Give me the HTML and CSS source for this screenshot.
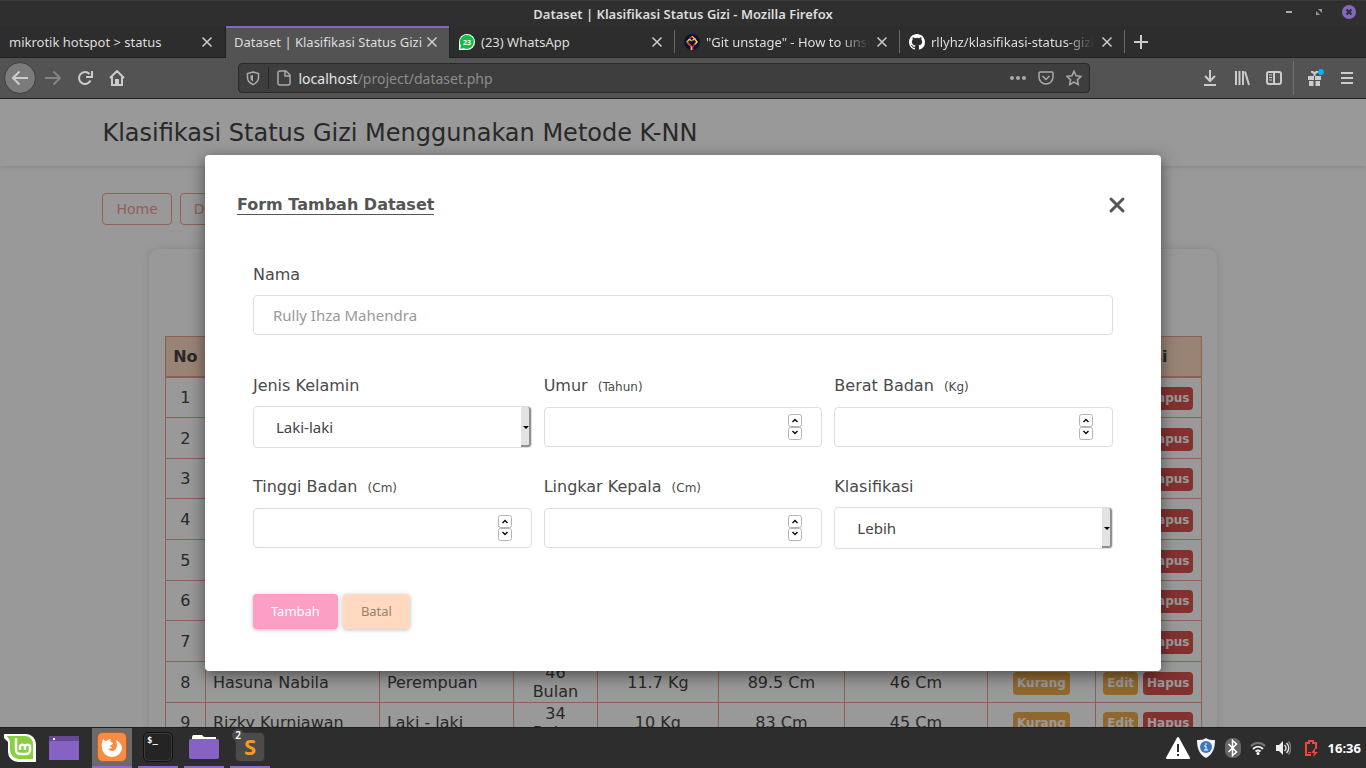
FILE: index.html
```html
<!DOCTYPE html>
<html lang="id">
<head>
<meta charset="utf-8">
<title>Dataset | Klasifikasi Status Gizi</title>
<link rel="stylesheet" href="styles.css">
</head>
<body>
<div class="titlebar">
  <span class="window-title">Dataset | Klasifikasi Status Gizi - Mozilla Firefox</span>
  <div class="window-controls">
    <button type="button" aria-label="Minimize"><svg width="14" height="14" viewBox="0 0 14 14"><path d="M4 7h6" stroke="#aaa" stroke-width="2"/></svg></button>
    <button type="button" aria-label="Restore"><svg width="14" height="14" viewBox="0 0 14 14"><path d="M6 4h4v4zM4 6v4h4z" fill="#999"/></svg></button>
    <button type="button" aria-label="Close"><svg width="14" height="14" viewBox="0 0 14 14"><circle cx="7" cy="7" r="7" fill="#8667bd"/><path d="M4.500 4.500l5 5m0-5l-5 5" stroke="#2d2d2d" stroke-width="2"/></svg></button>
  </div>
</div>

<div class="tabs">
  <div class="tab"><span class="tab-label">mikrotik hotspot &gt; status</span><button type="button" class="tab-close" aria-label="Close tab"><svg width="12" height="12" viewBox="0 0 12 12"><path d="M1.500 1.500l9 9m0-9l-9 9"/></svg></button></div>
  <div class="tab tab-active"><span class="tab-label">Dataset | Klasifikasi Status Gizi</span><button type="button" class="tab-close" aria-label="Close tab"><svg width="12" height="12" viewBox="0 0 12 12"><path d="M1.500 1.500l9 9m0-9l-9 9"/></svg></button></div>
  <div class="tab tab-divided">
    <svg class="favicon" width="16" height="16" viewBox="0 0 16 16"><path d="M0 16V8a8 8 0 1 1 8 8z" fill="#fff"/><path d="M1.200 14.800l.6-3.400A7 7 0 1 1 4.800 14.200z" fill="#10c042"/><text x="8" y="10.800" class="favicon-count">23</text></svg>
    <span class="tab-label">(23) WhatsApp</span><button type="button" class="tab-close" aria-label="Close tab"><svg width="12" height="12" viewBox="0 0 12 12"><path d="M1.500 1.500l9 9m0-9l-9 9"/></svg></button></div>
  <div class="tab tab-divided">
    <svg class="favicon" width="16" height="16" viewBox="0 0 16 16"><circle cx="8" cy="8" r="8" fill="#0b1233"/><g fill="none" stroke-width="1.300"><path d="M7.300 16v-3.500L3 8l2.500-3 2 2M8 2.200l2.500 2.300-2 2" stroke="#f6d43c"/><path d="M5.300 5L8 2.200M8.700 16v-3.500L13 8l-2.500-3.500M3 8l4.300 4.500" stroke="#e32758"/><path d="M10.500 4.500L13 8l-2 2.200" stroke="#f6d43c"/></g></svg>
    <span class="tab-label tab-fade">"Git unstage" - How to unstage</span><button type="button" class="tab-close" aria-label="Close tab"><svg width="12" height="12" viewBox="0 0 12 12"><path d="M1.500 1.500l9 9m0-9l-9 9"/></svg></button></div>
  <div class="tab tab-divided">
    <svg class="favicon" width="16" height="16" viewBox="0 0 16 16"><path fill="#fff" d="M8 0C3.580 0 0 3.580 0 8c0 3.540 2.290 6.530 5.470 7.590.4.070.55-.17.55-.38 0-.19-.01-.82-.01-1.490-2.010.37-2.530-.49-2.690-.94-.09-.23-.48-.94-.82-1.130-.28-.15-.68-.52-.01-.53.63-.01 1.080.58 1.230.82.72 1.210 1.870.87 2.330.66.070-.52.280-.87.51-1.070-1.780-.2-3.640-.89-3.640-3.950 0-.87.31-1.590.82-2.150-.08-.2-.36-1.020.08-2.120 0 0 .67-.21 2.200.82a7.420 7.420 0 0 1 4 0c1.530-1.040 2.200-.82 2.200-.82.44 1.100.16 1.920.08 2.120.51.56.82 1.270.82 2.150 0 3.070-1.870 3.750-3.650 3.950.29.25.54.73.54 1.480 0 1.070-.01 1.930-.01 2.200 0 .21.15.46.55.38A8.010 8.010 0 0 0 16 8c0-4.420-3.580-8-8-8z"/></svg>
    <span class="tab-label tab-fade">rllyhz/klasifikasi-status-gizi-knn</span><button type="button" class="tab-close" aria-label="Close tab"><svg width="12" height="12" viewBox="0 0 12 12"><path d="M1.500 1.500l9 9m0-9l-9 9"/></svg></button></div>
  <button type="button" class="new-tab" aria-label="New tab"><svg width="14" height="14" viewBox="0 0 14 14"><path d="M7 0v14M0 7h14"/></svg></button>
</div>

<div class="toolbar">
  <button type="button" class="tool tool-back" aria-label="Back"><svg width="16" height="16" viewBox="0 0 16 16"><path d="M16 8H1M7.500 1.500L1 8l6.500 6.500"/></svg></button>
  <button type="button" class="tool tool-off" aria-label="Forward"><svg width="16" height="16" viewBox="0 0 16 16"><path d="M0 8h15M8.500 1.500L15 8l-6.500 6.500"/></svg></button>
  <button type="button" class="tool" aria-label="Reload"><svg width="16" height="16" viewBox="0 0 16 16"><path d="M13.500 10.500A6 6 0 1 1 12.500 4"/><path d="M15 1v6H9" /></svg></button>
  <button type="button" class="tool" aria-label="Home"><svg width="16" height="16" viewBox="0 0 16 16"><path d="M1 8l7-7 7 7M3 7v8h10V7M7 15v-5h2v5"/></svg></button>
  <span class="spacer"></span>
  <div class="urlbar">
    <svg width="14" height="16" viewBox="0 0 14 16"><path d="M7 2l5.500 1.500v4c0 3.500-2 5.500-5.500 7-3.500-1.500-5.500-3.500-5.500-7v-4z"/><path d="M7 5v6.500c-2-1-2.500-2-2.500-4v-2z" fill="#aaa" stroke="none"/></svg>
    <span class="url-rule"></span>
    <svg width="14" height="16" viewBox="0 0 14 16"><path d="M3 1h6l4 4v8a2 2 0 0 1-2 2H3a2 2 0 0 1-2-2V3a2 2 0 0 1 2-2zM8 1v5h5"/></svg>
    <span class="url"><b>localhost</b>/project/dataset.php</span>
    <svg width="16" height="16" viewBox="0 0 16 16"><g fill="#aaa" stroke="none"><circle cx="2" cy="8" r="2"/><circle cx="8" cy="8" r="2"/><circle cx="14" cy="8" r="2"/></g></svg>
    <svg width="16" height="16" viewBox="0 0 16 16"><path d="M2 2h12a1 1 0 0 1 1 1v4a7 7 0 0 1-14 0V3a1 1 0 0 1 1-1z"/><path d="M4.500 6L8 9.500 11.500 6"/></svg>
    <svg width="16" height="16" viewBox="0 0 16 16"><path d="M8 1.200l2.100 4.500 4.900.6-3.600 3.400.9 4.900L8 12.200l-4.300 2.400.9-4.900L1 6.300l4.900-.6z"/></svg>
  </div>
  <span class="spacer"></span>
  <button type="button" class="tool" aria-label="Downloads"><svg width="16" height="16" viewBox="0 0 16 16"><path d="M8 0v11M3 6l5 5 5-5M2 15h12"/></svg></button>
  <button type="button" class="tool" aria-label="Library"><svg width="16" height="16" viewBox="0 0 16 16"><path d="M2 1v14M5.500 1v14M9 1v14M11 1.500L15 15"/></svg></button>
  <button type="button" class="tool" aria-label="Sidebar"><svg width="16" height="16" viewBox="0 0 16 16"><rect x="1" y="2" width="14" height="12" rx="2"/><path d="M8 2v12"/><path d="M3 5h3M3 7.500h3M3 10h3" stroke-width="1"/></svg></button>
  <span class="tool-rule"></span>
  <button type="button" class="tool tool-gift" aria-label="What's new"><svg width="18" height="18" viewBox="0 0 18 18"><path fill="#ccc" stroke="none" d="M2 7h5.500V5L5 3.500V2h2l1.500 1L10 2h2v1.500L9.500 5v2H15v4H9.500v1H14v5H9.500v-5h-2v5H3v-5h4.500v-1H2z"/><path d="M8.500 7v10M2 11.500h13" stroke="#535353" stroke-width="1"/><circle cx="15" cy="3" r="3" fill="#00b3f4" stroke="none"/></svg></button>
  <button type="button" class="tool" aria-label="Menu"><svg width="14" height="14" viewBox="0 0 14 14"><path d="M1 2h12M1 7h12M1 12h12"/></svg></button>
</div>

<main class="viewport">
  <div class="page">
    <header class="site-header"><h1 class="container">Klasifikasi Status Gizi Menggunakan Metode K-NN</h1></header>
    <div class="container">
      <nav class="site-nav"><a href="#home">Home</a><a href="#dataset">Dataset</a></nav>
      <section class="card">
        <table class="dataset">
          <colgroup><col class="c-no"><col class="c-name"><col class="c-sex"><col class="c-age"><col class="c-weight"><col class="c-height"><col class="c-head"><col class="c-class"><col class="c-act"></colgroup>
          <thead><tr><th>No</th><th>Nama</th><th>Kelamin</th><th>Umur</th><th>Berat</th><th>Tinggi</th><th>Kepala</th><th>Status</th><th>Aksi</th></tr></thead>
          <tbody>
            <tr><td>1</td><td></td><td></td><td></td><td></td><td></td><td></td><td></td><td><span class="actions"><button type="button" class="badge warn">Edit</button><button type="button" class="badge danger">Hapus</button></span></td></tr>
            <tr><td>2</td><td></td><td></td><td></td><td></td><td></td><td></td><td></td><td><span class="actions"><button type="button" class="badge warn">Edit</button><button type="button" class="badge danger">Hapus</button></span></td></tr>
            <tr><td>3</td><td></td><td></td><td></td><td></td><td></td><td></td><td></td><td><span class="actions"><button type="button" class="badge warn">Edit</button><button type="button" class="badge danger">Hapus</button></span></td></tr>
            <tr><td>4</td><td></td><td></td><td></td><td></td><td></td><td></td><td></td><td><span class="actions"><button type="button" class="badge warn">Edit</button><button type="button" class="badge danger">Hapus</button></span></td></tr>
            <tr><td>5</td><td></td><td></td><td></td><td></td><td></td><td></td><td></td><td><span class="actions"><button type="button" class="badge warn">Edit</button><button type="button" class="badge danger">Hapus</button></span></td></tr>
            <tr><td>6</td><td></td><td></td><td></td><td></td><td></td><td></td><td></td><td><span class="actions"><button type="button" class="badge warn">Edit</button><button type="button" class="badge danger">Hapus</button></span></td></tr>
            <tr><td>7</td><td></td><td></td><td></td><td></td><td></td><td></td><td></td><td><span class="actions"><button type="button" class="badge warn">Edit</button><button type="button" class="badge danger">Hapus</button></span></td></tr>
            <tr><td>8</td><td class="left">Hasuna Nabila</td><td class="left">Perempuan</td><td>46 Bulan</td><td>11.7 Kg</td><td>89.5 Cm</td><td>46 Cm</td><td><span class="actions"><span class="badge warn">Kurang</span></span></td><td><span class="actions"><button type="button" class="badge warn">Edit</button><button type="button" class="badge danger">Hapus</button></span></td></tr>
            <tr><td>9</td><td class="left">Rizky Kurniawan</td><td class="left">Laki - laki</td><td>34 Bulan</td><td>10 Kg</td><td>83 Cm</td><td>45 Cm</td><td><span class="actions"><span class="badge warn">Kurang</span></span></td><td><span class="actions"><button type="button" class="badge warn">Edit</button><button type="button" class="badge danger">Hapus</button></span></td></tr>
          </tbody>
        </table>
      </section>
    </div>
  </div>

  <div class="overlay">
    <form class="modal" role="dialog" aria-labelledby="form-title">
      <div class="modal-head">
        <h2 id="form-title">Form Tambah Dataset</h2>
        <button type="button" class="modal-close" aria-label="Tutup"><svg width="18" height="18" viewBox="0 0 18 18"><path d="M3 3l12 12M15 3L3 15"/></svg></button>
      </div>
      <div class="modal-body">
        <div class="field">
          <label for="nama">Nama</label>
          <input id="nama" type="text" placeholder="Rully Ihza Mahendra">
        </div>
        <div class="grid">
          <div class="field"><label for="kelamin">Jenis Kelamin</label><div class="control select"><select id="kelamin"><option>Laki-laki</option><option>Perempuan</option></select></div></div>
          <div class="field"><label for="umur">Umur <small>(Tahun)</small></label><div class="control"><input id="umur" type="number"><svg class="spin" width="14" height="26" viewBox="0 0 14 26"><rect x=".5" y=".5" width="13" height="12" rx="2"/><rect x=".5" y="13.500" width="13" height="12" rx="2"/><path d="M4.500 8L7 5.500 9.500 8M4.500 17L7 19.500 9.500 17"/></svg></div></div>
          <div class="field"><label for="berat">Berat Badan <small>(Kg)</small></label><div class="control"><input id="berat" type="number"><svg class="spin" width="14" height="26" viewBox="0 0 14 26"><rect x=".5" y=".5" width="13" height="12" rx="2"/><rect x=".5" y="13.500" width="13" height="12" rx="2"/><path d="M4.500 8L7 5.500 9.500 8M4.500 17L7 19.500 9.500 17"/></svg></div></div>
          <div class="field"><label for="tinggi">Tinggi Badan <small>(Cm)</small></label><div class="control"><input id="tinggi" type="number"><svg class="spin" width="14" height="26" viewBox="0 0 14 26"><rect x=".5" y=".5" width="13" height="12" rx="2"/><rect x=".5" y="13.500" width="13" height="12" rx="2"/><path d="M4.500 8L7 5.500 9.500 8M4.500 17L7 19.500 9.500 17"/></svg></div></div>
          <div class="field"><label for="kepala">Lingkar Kepala <small>(Cm)</small></label><div class="control"><input id="kepala" type="number"><svg class="spin" width="14" height="26" viewBox="0 0 14 26"><rect x=".5" y=".5" width="13" height="12" rx="2"/><rect x=".5" y="13.500" width="13" height="12" rx="2"/><path d="M4.500 8L7 5.500 9.500 8M4.500 17L7 19.500 9.500 17"/></svg></div></div>
          <div class="field"><label for="klasifikasi">Klasifikasi</label><div class="control select"><select id="klasifikasi"><option>Lebih</option><option>Normal</option><option>Kurang</option></select></div></div>
        </div>
        <div class="form-actions"><button type="submit" class="btn btn-add">Tambah</button><button type="button" class="btn btn-cancel">Batal</button></div>
      </div>
    </form>
  </div>
</main>

<footer class="taskbar">
  <div class="launchers">
    <button type="button" class="launch" aria-label="Menu"><svg width="32" height="30" viewBox="0 0 32 30"><path d="M0 1h22a10 10 0 0 1 10 10v18H14A10 10 0 0 1 4 19V9L0 5z" fill="#fff"/><path d="M3 3h18a8 8 0 0 1 8 8v15H15a9 9 0 0 1-9-9V8z" fill="#87cf3e"/><path d="M12 5v12a4 4 0 0 0 4 4h6a4 4 0 0 0 4-4v-4a3 3 0 0 0-5 0v4M21 13a3 3 0 0 0-5 0v4" fill="none" stroke="#fff" stroke-width="2.500"/></svg></button>
    <button type="button" class="launch desktop" aria-label="Show desktop"><svg width="30" height="24" viewBox="0 0 30 24"><path d="M0 0h30v24H0z" fill="#8662c5"/><path d="M0 0h30v5H0z" fill="#644a94"/><path d="M4 2h2v2H4z" fill="#fff"/></svg></button>
    <button type="button" class="launch open focus" aria-label="Firefox"><svg width="30" height="30" viewBox="0 0 30 30"><rect x=".5" y=".5" width="29" height="29" rx="5" fill="#f98c42" stroke="#b65d24"/><path d="M6 7c1 1 2 2 3 2 1-1 3-2 5-2-1 1-1 2 0 3l2 1c0 2-3 2-3 3 0 1 1 1 2 1-1 2-3 2-4 1 1 3 5 4 7 2 3-3 2-6 1-10 4 2 6 5 6 8a10 9 0 0 1-20 0c-1-3 0-6 1-9z" fill="#fff"/></svg></button>
    <button type="button" class="launch open" aria-label="Terminal"><svg width="30" height="30" viewBox="0 0 30 30"><rect x=".5" y=".5" width="29" height="29" rx="5" fill="#242424" stroke="#101010"/><rect x="1.500" y="1.500" width="27" height="27" rx="4" fill="none" stroke="#3c3c3c"/><text x="4" y="11" class="prompt">$_</text></svg></button>
    <button type="button" class="launch open" aria-label="Files"><svg width="30" height="26" viewBox="0 0 30 26"><path d="M3 6V3l1-2h9l2 2h12v4z" fill="#fff"/><rect y="5" width="30" height="20" rx="2" fill="#8662c5"/></svg></button>
    <button type="button" class="launch open" aria-label="Sublime Text"><svg width="30" height="30" viewBox="0 0 30 30"><rect x=".5" y=".5" width="29" height="29" rx="4" fill="#4b4b4b" stroke="#333"/><text x="15" y="23" class="sublime">S</text></svg><span class="count">2</span></button>
  </div>
  <div class="tray">
    <svg class="tray-warning" width="24" height="24" viewBox="0 0 24 24"><path d="M12 2l11 20H1z" fill="#fff" stroke="#fff" stroke-width="2" stroke-linejoin="round"/><path d="M12 8v8M12 18v2" stroke="#2d2d2d" stroke-width="2"/></svg>
    <svg width="20" height="22" viewBox="0 0 20 22"><path d="M10 1c3 2 5 2 9 2 0 8-2 14-9 18C3 17 1 11 1 3c4 0 6 0 9-2z" fill="#f4f4f4"/><circle cx="10" cy="10" r="6" fill="#3d77bd"/><path d="M10 6v2M8 9h2v4M8 13h4" stroke="#fff" fill="none"/></svg>
    <svg width="16" height="22" viewBox="0 0 16 22"><rect x="0" y="1" width="16" height="20" rx="7" fill="#666"/><path d="M3.500 7l8 8-4 3.500v-15l4 3.500-8 8" fill="none" stroke="#fff" stroke-width="1.500"/></svg>
    <svg width="16" height="16" viewBox="0 0 16 16"><g fill="none" stroke="#eee" stroke-width="2"><path d="M1 6c4-4 10-4 14 0" stroke="#777"/><path d="M3 9c3-3 7-3 10 0M5.500 11.500c2-1.500 3-1.500 5 0"/></g><circle cx="8" cy="13.500" r="1.500" fill="#fff"/></svg>
    <svg width="16" height="16" viewBox="0 0 16 16"><path d="M1 5h3l4-4v14l-4-4H1z" fill="#eee"/><g fill="none" stroke="#ddd" stroke-width="1.500"><path d="M9.500 5c2 2 2 4 0 6M11.500 3c3 3 3 7 0 10"/><path d="M13.500 1.500c3 4 3 9 0 13" stroke="#777"/></g></svg>
    <svg class="tray-battery" width="16" height="18" viewBox="0 0 16 18"><path d="M8 16H3V4h3V2h4v2h3v6" fill="none" stroke="#f8433f" stroke-width="2"/><path d="M5 13h4v1H5zM12 9l-4 5h3l-1 4 5-5h-3z" fill="#f8433f"/></svg>
    <time>16:36</time>
  </div>
</footer>
</body>
</html>
```
FILE: styles.css
```css
*, *::before, *::after { box-sizing: border-box; }

body {
  margin: 0;
  height: 100vh;
  display: flex;
  flex-direction: column;
  overflow: hidden;
  background: #2d2d2d;
  color: #ddd;
  font-family: "Noto Sans", sans-serif;
  font-size: 13px;
}

button { border: 0; padding: 0; background: none; color: inherit; font: inherit; }
svg { display: block; flex: none; }

/* Window frame */
.titlebar {
  position: relative;
  height: 26px;
  flex: none;
  display: flex;
  align-items: center;
  justify-content: center;
  background: #2f2f2f;
  border-top: 1px solid #3a3a3a;
}
.window-title { font-size: 13px; font-weight: 600; }
.window-controls {
  position: absolute;
  top: 4px;
  right: 10px;
  display: flex;
  gap: 16px;
}

.tabs {
  height: 32px;
  flex: none;
  display: flex;
  background: #2d2d2d;
  border-bottom: 1px solid #202020;
}
.tab {
  position: relative;
  flex: 0 1 225px;
  min-width: 0;
  display: flex;
  align-items: center;
  gap: 3px;
  padding: 0 12px 0 9px;
}
.favicon { margin-right: 3px; }
.tab-label { flex: 1; min-width: 0; overflow: hidden; white-space: nowrap; font-size: 13px; }
.tab-fade { mask-image: linear-gradient(to right, #000 80%, transparent 98%); }
.tab-active {
  background: #535353;
  border: solid #202020;
  border-width: 0 1px;
  box-shadow: inset 0 2px #8667bd;
  margin-bottom: -1px;
  padding: 0 11px 0 8px;
}
.tab-divided::after {
  content: "";
  position: absolute;
  right: 0;
  top: 4px;
  bottom: 4px;
  width: 1px;
  background: #686868;
}
.tab-close svg, .new-tab svg { fill: none; stroke: #ccc; stroke-width: 2; }
.tab-close svg { stroke-width: 1.5; }
.new-tab { padding: 0 9px; }
.favicon-count { font: bold 7px "Noto Sans", sans-serif; fill: #fff; text-anchor: middle; }

.toolbar {
  height: 41px;
  flex: none;
  display: flex;
  align-items: center;
  padding: 0 3px 0 4px;
  background: #535353;
  border-bottom: 1px solid #202020;
}
.toolbar svg { fill: none; stroke: #ccc; stroke-width: 2; }
.tool { width: 32px; height: 32px; display: grid; place-items: center; }
.tool-back { margin-right: 1px; border-radius: 50%; background: #7b7b7b; border: 1px solid #3c3c3c; }
.tool-off { opacity: .4; }
.tool-rule { width: 1px; height: 34px; margin: 0 5px 0 3px; background: #727272; }
.spacer { flex: 1; }
.urlbar {
  flex: 8;
  height: 30px;
  display: flex;
  align-items: center;
  gap: 12px;
  padding: 0 7px;
  background: #3e3e3e;
  border: 1px solid #282828;
  border-radius: 4px;
}
.urlbar svg { stroke: #aaa; stroke-width: 1.5; }
.url-rule { width: 1px; height: 22px; margin: 0 -4px; background: #252525; }
.url { flex: 1; margin-left: -4px; font-size: 14px; color: #8c8c8c; }
.url b { font-weight: 400; color: #e6e6e6; }

/* Web page */
.viewport {
  position: relative;
  flex: 1;
  min-height: 0;
  overflow: hidden;
  background: #fff;
  color: #444;
  font-family: "DejaVu Sans", sans-serif;
  font-size: 16px;
}
.container { width: 85%; margin: 0 auto; }
.site-header { padding: 20px 0 19px; box-shadow: 0 1px 5px rgba(0, 0, 0, .12); }
.site-header h1 { font-size: 24px; font-weight: 400; line-height: 28px; }
.site-nav { display: flex; gap: 8px; padding: 27px 0 24px; }
.site-nav a {
  padding: 0 13px;
  border: 1px solid #f0a492;
  border-radius: 4px;
  color: #f0a492;
  font-size: 14px;
  line-height: 30px;
  text-decoration: none;
}
.card {
  width: 92%;
  margin: 0 auto;
  padding: 87px 16px 16px;
  border-radius: 10px;
  box-shadow: 0 0 8px rgba(0, 0, 0, .12);
}
.dataset { width: 100%; border-collapse: collapse; table-layout: fixed; line-height: 19px; }
.dataset th, .dataset td { padding: 0 7px; border: 1px solid #e9a08e; text-align: center; }
.dataset th { background: #ffdac1; border-bottom-width: 2px; overflow: hidden; }
.dataset tr { height: 41px; }
.dataset thead tr { height: 40px; }
.dataset tbody tr:nth-child(3n) { height: 40px; }
.dataset .left { text-align: left; }
.c-no { width: 40px; }
.c-name { width: 174px; }
.c-sex { width: 134px; }
.c-age { width: 84px; }
.c-weight { width: 121px; }
.c-height { width: 126px; }
.c-head { width: 143px; }
.c-class { width: 108px; }
.c-act { width: 106px; }
.actions { display: flex; justify-content: center; gap: 5px; padding-top: 2px; }
.badge {
  padding: 0 4px;
  border-radius: 4px;
  color: #fff;
  font-size: 12px;
  font-weight: 700;
  line-height: 23px;
}
.warn { background: #f0ad4e; }
.danger { background: #d9534f; }

/* Dialog */
.overlay {
  position: absolute;
  inset: 0;
  display: flex;
  align-items: center;
  justify-content: center;
  background: rgba(0, 0, 0, .4);
}
.modal {
  width: 70%;
  padding: 32px 32px 42px;
  background: #fff;
  border-radius: 4px;
  box-shadow: 0 4px 16px rgba(0, 0, 0, .5);
  color: #4a4a4a;
}
.modal-head { display: flex; align-items: center; justify-content: space-between; }
.modal-head h2 {
  margin: 0;
  color: #555;
  font-size: 16px;
  line-height: 18px;
  border-bottom: 1px solid #555;
}
.modal-close { padding: 9px 3px; }
.modal-close svg { fill: none; stroke: #555; stroke-width: 3; stroke-linecap: round; }
.modal-body { padding: 42px 16px 0; }
.field label { display: block; margin-bottom: 10px; line-height: 20px; }
.field small { margin-left: 5px; font-size: 12px; }
.field input, .field select {
  display: block;
  width: 100%;
  height: 40px;
  padding: 0 19px;
  border: 1px solid #ddd;
  border-radius: 4px;
  background: #fff;
  color: #444;
  font-family: "Noto Sans", sans-serif;
  font-size: 15px;
}
.field input::placeholder { color: #999; }
.field input[type="number"] { appearance: textfield; }
.field select { height: 42px; padding: 0 22px; appearance: none; }
.grid { display: grid; grid-template-columns: repeat(3, 1fr); gap: 29px 12px; margin-top: 41px; }
.control { position: relative; }
.spin { position: absolute; right: 20px; top: 7px; fill: #fff; stroke: #b4b4b4; }
.spin path { fill: none; stroke: #111; stroke-width: 1.5; }
.select::before {
  content: "";
  position: absolute;
  top: 1px;
  right: 1px;
  bottom: 1px;
  width: 10px;
  background: #e3e3e3;
  border: solid #909090;
  border-width: 0 2px 2px 0;
  border-radius: 0 3px 3px 0;
}
.select::after {
  content: "";
  position: absolute;
  right: 3px;
  top: 20px;
  border: 3px solid transparent;
  border-top-color: #000;
  border-bottom: 0;
}
.form-actions { display: flex; gap: 5px; margin-top: 45px; }
.btn {
  padding: 0 18px;
  border-radius: 4px;
  font-family: "Noto Sans", sans-serif;
  font-size: 13px;
  line-height: 35px;
  box-shadow: 0 1px 4px rgba(0, 0, 0, .25);
}
.btn-add { background: #fb9fc4; color: #fff; }
.btn-cancel { background: #ffdac1; color: #96826f; }

/* Desktop panel */
.taskbar {
  height: 41px;
  flex: none;
  display: flex;
  justify-content: space-between;
  background: #2d2d2d;
  border-top: 1px solid #202020;
}
.launchers { display: flex; gap: 6px; }
.launch { position: relative; width: 40px; display: grid; place-items: center; }
.desktop { padding-right: 4px; }
.open { border-bottom: 2px solid #8f6ccb; }
.focus { background: #6a6a6a; }
.prompt { font: bold 9px "DejaVu Sans Mono", monospace; fill: #fff; }
.sublime { font: bold 22px "Noto Sans", sans-serif; fill: #f89a1c; text-anchor: middle; }
.count {
  position: absolute;
  left: 2px;
  top: 1px;
  width: 12px;
  height: 12px;
  border-radius: 50%;
  background: #4b4b4b;
  color: #fff;
  font-size: 10px;
  font-weight: 600;
  line-height: 12px;
}
.tray { display: flex; align-items: center; gap: 9px; padding-right: 5px; }
.tray-warning { margin-right: -3px; }
.tray-battery { margin-left: 3px; }
.tray time { color: #fff; font-size: 13px; font-weight: 700; }
```
